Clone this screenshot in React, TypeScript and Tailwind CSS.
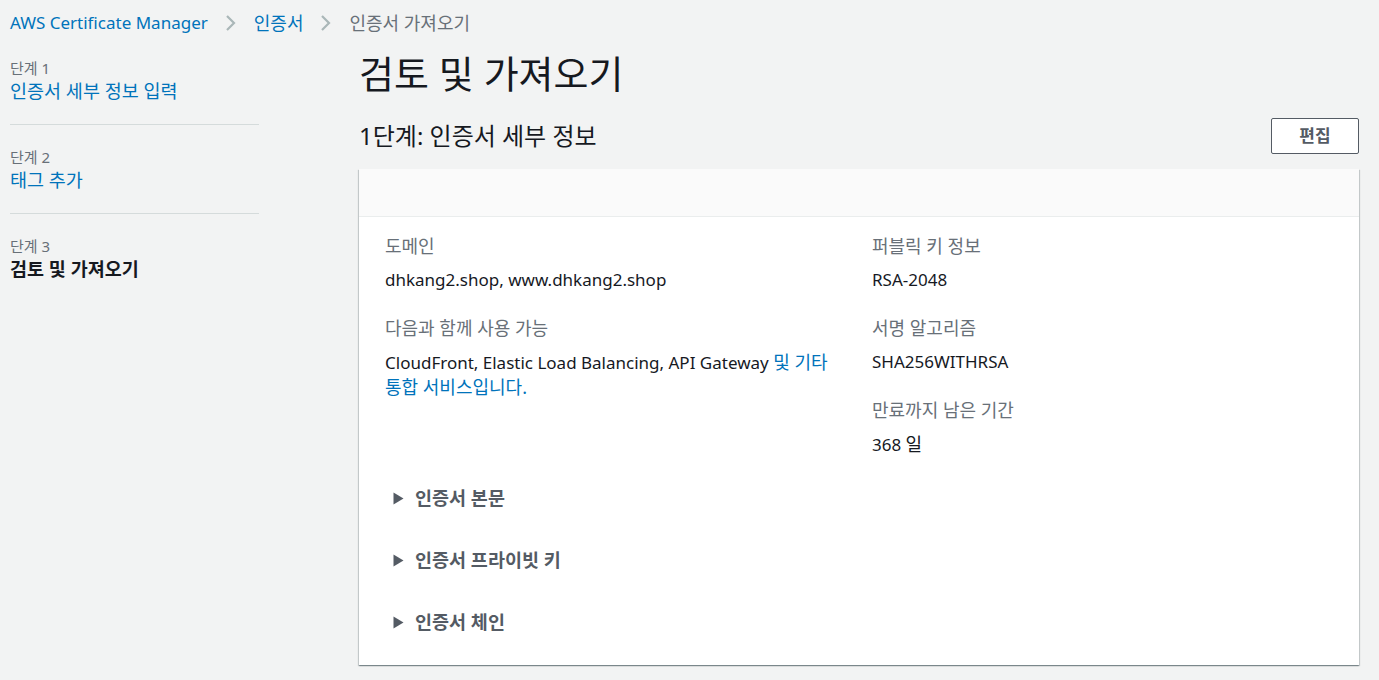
const font = { fontFamily: '"Noto Sans", "Noto Sans CJK KR", sans-serif' };

function Chevron() {
  return (
    <svg width="14" height="18" viewBox="0 0 14 18" className="mx-[16px]">
      <path d="M3 2l7 7-7 7" fill="none" stroke="#aab7b8" strokeWidth="2.2" />
    </svg>
  );
}

function Caret() {
  return (
    <svg width="11" height="13" viewBox="0 0 11 13">
      <path d="M0.5 0.5L10.5 6.5 0.5 12.5z" fill="#545b64" />
    </svg>
  );
}

function Field({ label, children }: { label: string; children: React.ReactNode }) {
  return (
    <div>
      <div className="text-[18px] leading-[24px] text-[#687078]">{label}</div>
      <div className="mt-[10px] text-[17px] leading-[24px] text-[#16191f]">{children}</div>
    </div>
  );
}

export default function App() {
  const steps = [
    { n: 1, t: '인증서 세부 정보 입력' },
    { n: 2, t: '태그 추가' },
    { n: 3, t: '검토 및 가져오기', active: true },
  ];
  return (
    <div style={font} className="min-h-[680px] w-[1379px] bg-[#f2f3f3] text-[#16191f]">
      <div className="flex h-[46px] items-center px-[10px]">
        <span className="text-[17px] text-[#0073bb]">AWS Certificate Manager</span>
        <Chevron />
        <span className="text-[18px] text-[#0073bb]">인증서</span>
        <Chevron />
        <span className="text-[18px] text-[#687078]">인증서 가져오기</span>
      </div>

      <div className="flex">
        <div className="w-[259px] shrink-0 pl-[10px] pt-[12px]">
          {steps.map((s, i) => (
            <div key={s.n} className={i < 2 ? 'mb-[22px] border-b border-[#d5dbdb] pb-[20px]' : ''}>
              <div className="text-[15px] leading-[20px] text-[#687078]">단계 {s.n}</div>
              <div
                className={
                  'text-[18.5px] leading-[26px] ' +
                  (s.active ? 'font-bold text-[#16191f]' : 'text-[#0073bb]')
                }
              >
                {s.t}
              </div>
            </div>
          ))}
        </div>

        <div className="ml-[100px] w-[1000px]">
          <h1 className="text-[38px] leading-[54px] font-normal">검토 및 가져오기</h1>
          <div className="mt-[18px] flex items-center justify-between">
            <h2 className="text-[24px] leading-[30px] font-normal">1단계: 인증서 세부 정보</h2>
            <button className="h-[36px] w-[88px] rounded-[2px] border border-[#545b64] bg-white text-[17px] font-bold text-[#545b64]">
              편집
            </button>
          </div>

          <div className="mt-[15px] bg-white shadow-[0_1px_1px_0_rgba(0,28,36,0.3),1px_1px_1px_0_rgba(0,28,36,0.15),-1px_1px_1px_0_rgba(0,28,36,0.15)]">
            <div className="h-[48px] border-b border-[#eaeded] bg-[#fafafa]" />
            <div className="px-[26px] pt-[17px] pb-[10px]">
              <div className="grid grid-cols-2 gap-x-[26px]">
                <div className="flex flex-col gap-[24px]">
                  <Field label="도메인">dhkang2.shop, www.dhkang2.shop</Field>
                  <Field label="다음과 함께 사용 가능">
                    CloudFront, Elastic Load Balancing, API Gateway{' '}
                    <span className="text-[18px] text-[#0073bb]">및 기타 통합 서비스입니다.</span>
                  </Field>
                </div>
                <div className="flex flex-col gap-[24px]">
                  <Field label="퍼블릭 키 정보">RSA-2048</Field>
                  <Field label="서명 알고리즘">SHA256WITHRSA</Field>
                  <Field label="만료까지 남은 기간">
                    368 <span className="text-[18px]">일</span>
                  </Field>
                </div>
              </div>
              <div className="mt-[12px]">
                {['인증서 본문', '인증서 프라이빗 키', '인증서 체인'].map((t) => (
                  <div key={t} className="flex h-[62px] items-center gap-[11px] pl-[8px] pb-[4px]">
                    <Caret />
                    <span className="text-[18.5px] font-bold text-[#545b64]">{t}</span>
                  </div>
                ))}
              </div>
            </div>
          </div>
        </div>
      </div>
    </div>
  );
}
